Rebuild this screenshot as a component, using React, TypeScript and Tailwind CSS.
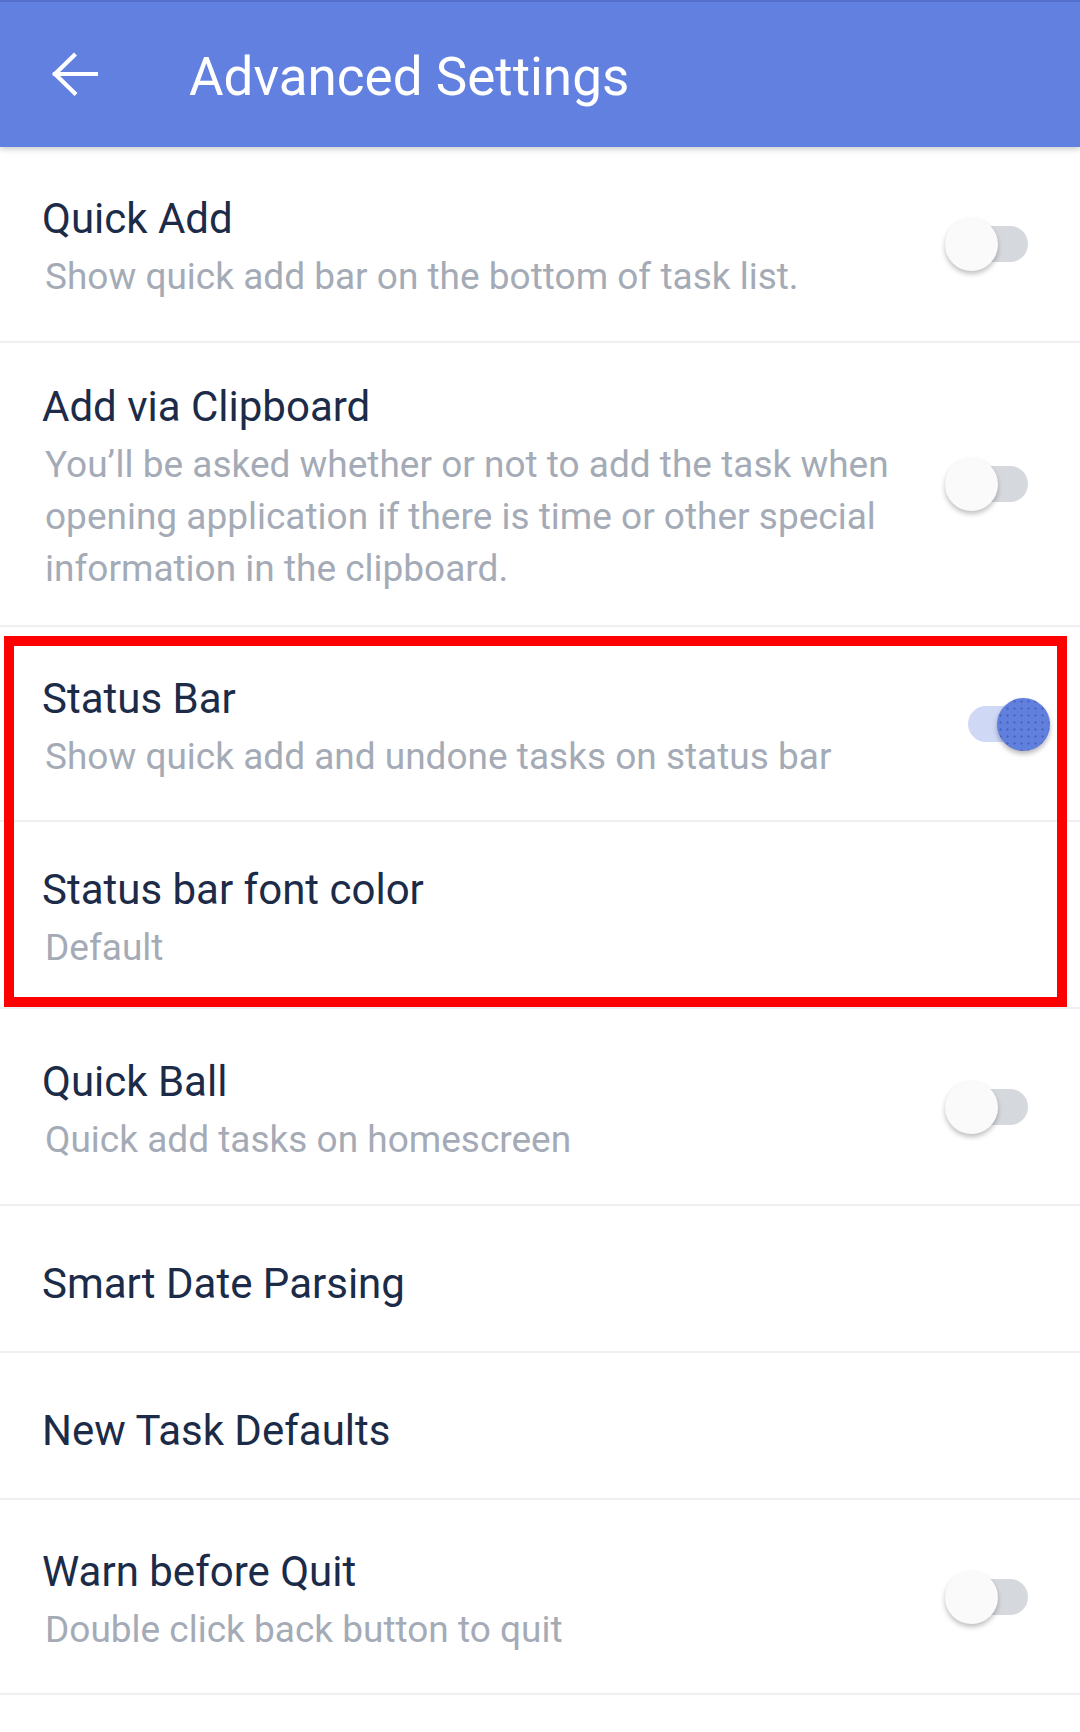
import React from "react";

type Setting = {
  title: string;
  sub?: string;
  toggle?: "on" | "off";
  h: string;
};

function Toggle({ on }: { on: boolean }) {
  if (on) {
    return (
      <div className="relative mb-[10px] h-[52px] w-[106px] shrink-0">
        <div className="absolute left-[23px] top-[8px] h-[36px] w-[78px] rounded-full bg-[#cfd9f6]" />
        <div className="absolute left-[52px] top-0 h-[53px] w-[53px] rounded-full bg-[#6180de] bg-[radial-gradient(rgba(40,60,140,0.35)_1px,transparent_1.2px)] bg-[length:7px_7px] shadow-[0_3px_5px_rgba(0,0,0,0.28)]" />
      </div>
    );
  }
  return (
    <div className="relative mb-[10px] h-[52px] w-[106px] shrink-0">
      <div className="absolute left-[5px] top-[8px] h-[36px] w-[78px] rounded-full bg-[#d5d8dd]" />
      <div className="absolute left-0 top-0 h-[53px] w-[53px] rounded-full bg-[#fafafa] shadow-[0_3px_5px_rgba(0,0,0,0.25)]" />
    </div>
  );
}

function Row({ title, sub, toggle, h }: Setting) {
  return (
    <div className={`flex items-center border-b-2 border-[#f0f0f2] pl-[42px] pr-[29px] pt-[10px] ${h}`}>
      <div className="min-w-0 flex-1">
        <div className="text-[42px] leading-[48px] text-[#1b2b48]">{title}</div>
        {sub && (
          <div className="mt-[8px] pl-[3px] text-[37px] leading-[52px] text-[#a4abb6]">{sub}</div>
        )}
      </div>
      {toggle && <Toggle on={toggle === "on"} />}
    </div>
  );
}

export default function App() {
  return (
    <div className="min-h-[1732px] w-[1080px] bg-white font-['Roboto','Liberation_Sans',sans-serif]">
      <header className="relative z-10 flex h-[147px] items-center border-t-2 border-[#5570cc] bg-[#6280df] shadow-[0_2px_6px_rgba(0,0,0,0.22)]">
        <svg
          aria-hidden="true"
          viewBox="0 0 48 48"
          className="ml-[50px] h-[48px] w-[48px]"
          fill="none"
          stroke="white"
          strokeWidth="4.2"
          strokeLinecap="square"
        >
          <path d="M5 23h41" />
          <path d="M24 4.5L5 23l19.5 19" />
        </svg>
        <h1 className="ml-[91px] mt-[6px] text-[53px] font-normal leading-[61px] text-white">
          Advanced Settings
        </h1>
      </header>

      <Row
        title="Quick Add"
        sub="Show quick add bar on the bottom of task list."
        toggle="off"
        h="h-[196px]"
      />
      <Row
        title="Add via Clipboard"
        sub="You’ll be asked whether or not to add the task when opening application if there is time or other special information in the clipboard."
        toggle="off"
        h="h-[284px]"
      />

      <div className="relative">
        <Row
          title="Status Bar"
          sub="Show quick add and undone tasks on status bar"
          toggle="on"
          h="h-[195px]"
        />
        <Row title="Status bar font color" sub="Default" h="h-[187px]" />
        <div className="pointer-events-none absolute bottom-[2px] left-[4px] right-[13px] top-[9px] border-[10px] border-[#ff0000]" />
      </div>

      <Row
        title="Quick Ball"
        sub="Quick add tasks on homescreen"
        toggle="off"
        h="h-[197px]"
      />
      <Row title="Smart Date Parsing" h="h-[147px]" />
      <Row title="New Task Defaults" h="h-[147px]" />
      <Row
        title="Warn before Quit"
        sub="Double click back button to quit"
        toggle="off"
        h="h-[195px]"
      />
    </div>
  );
}
